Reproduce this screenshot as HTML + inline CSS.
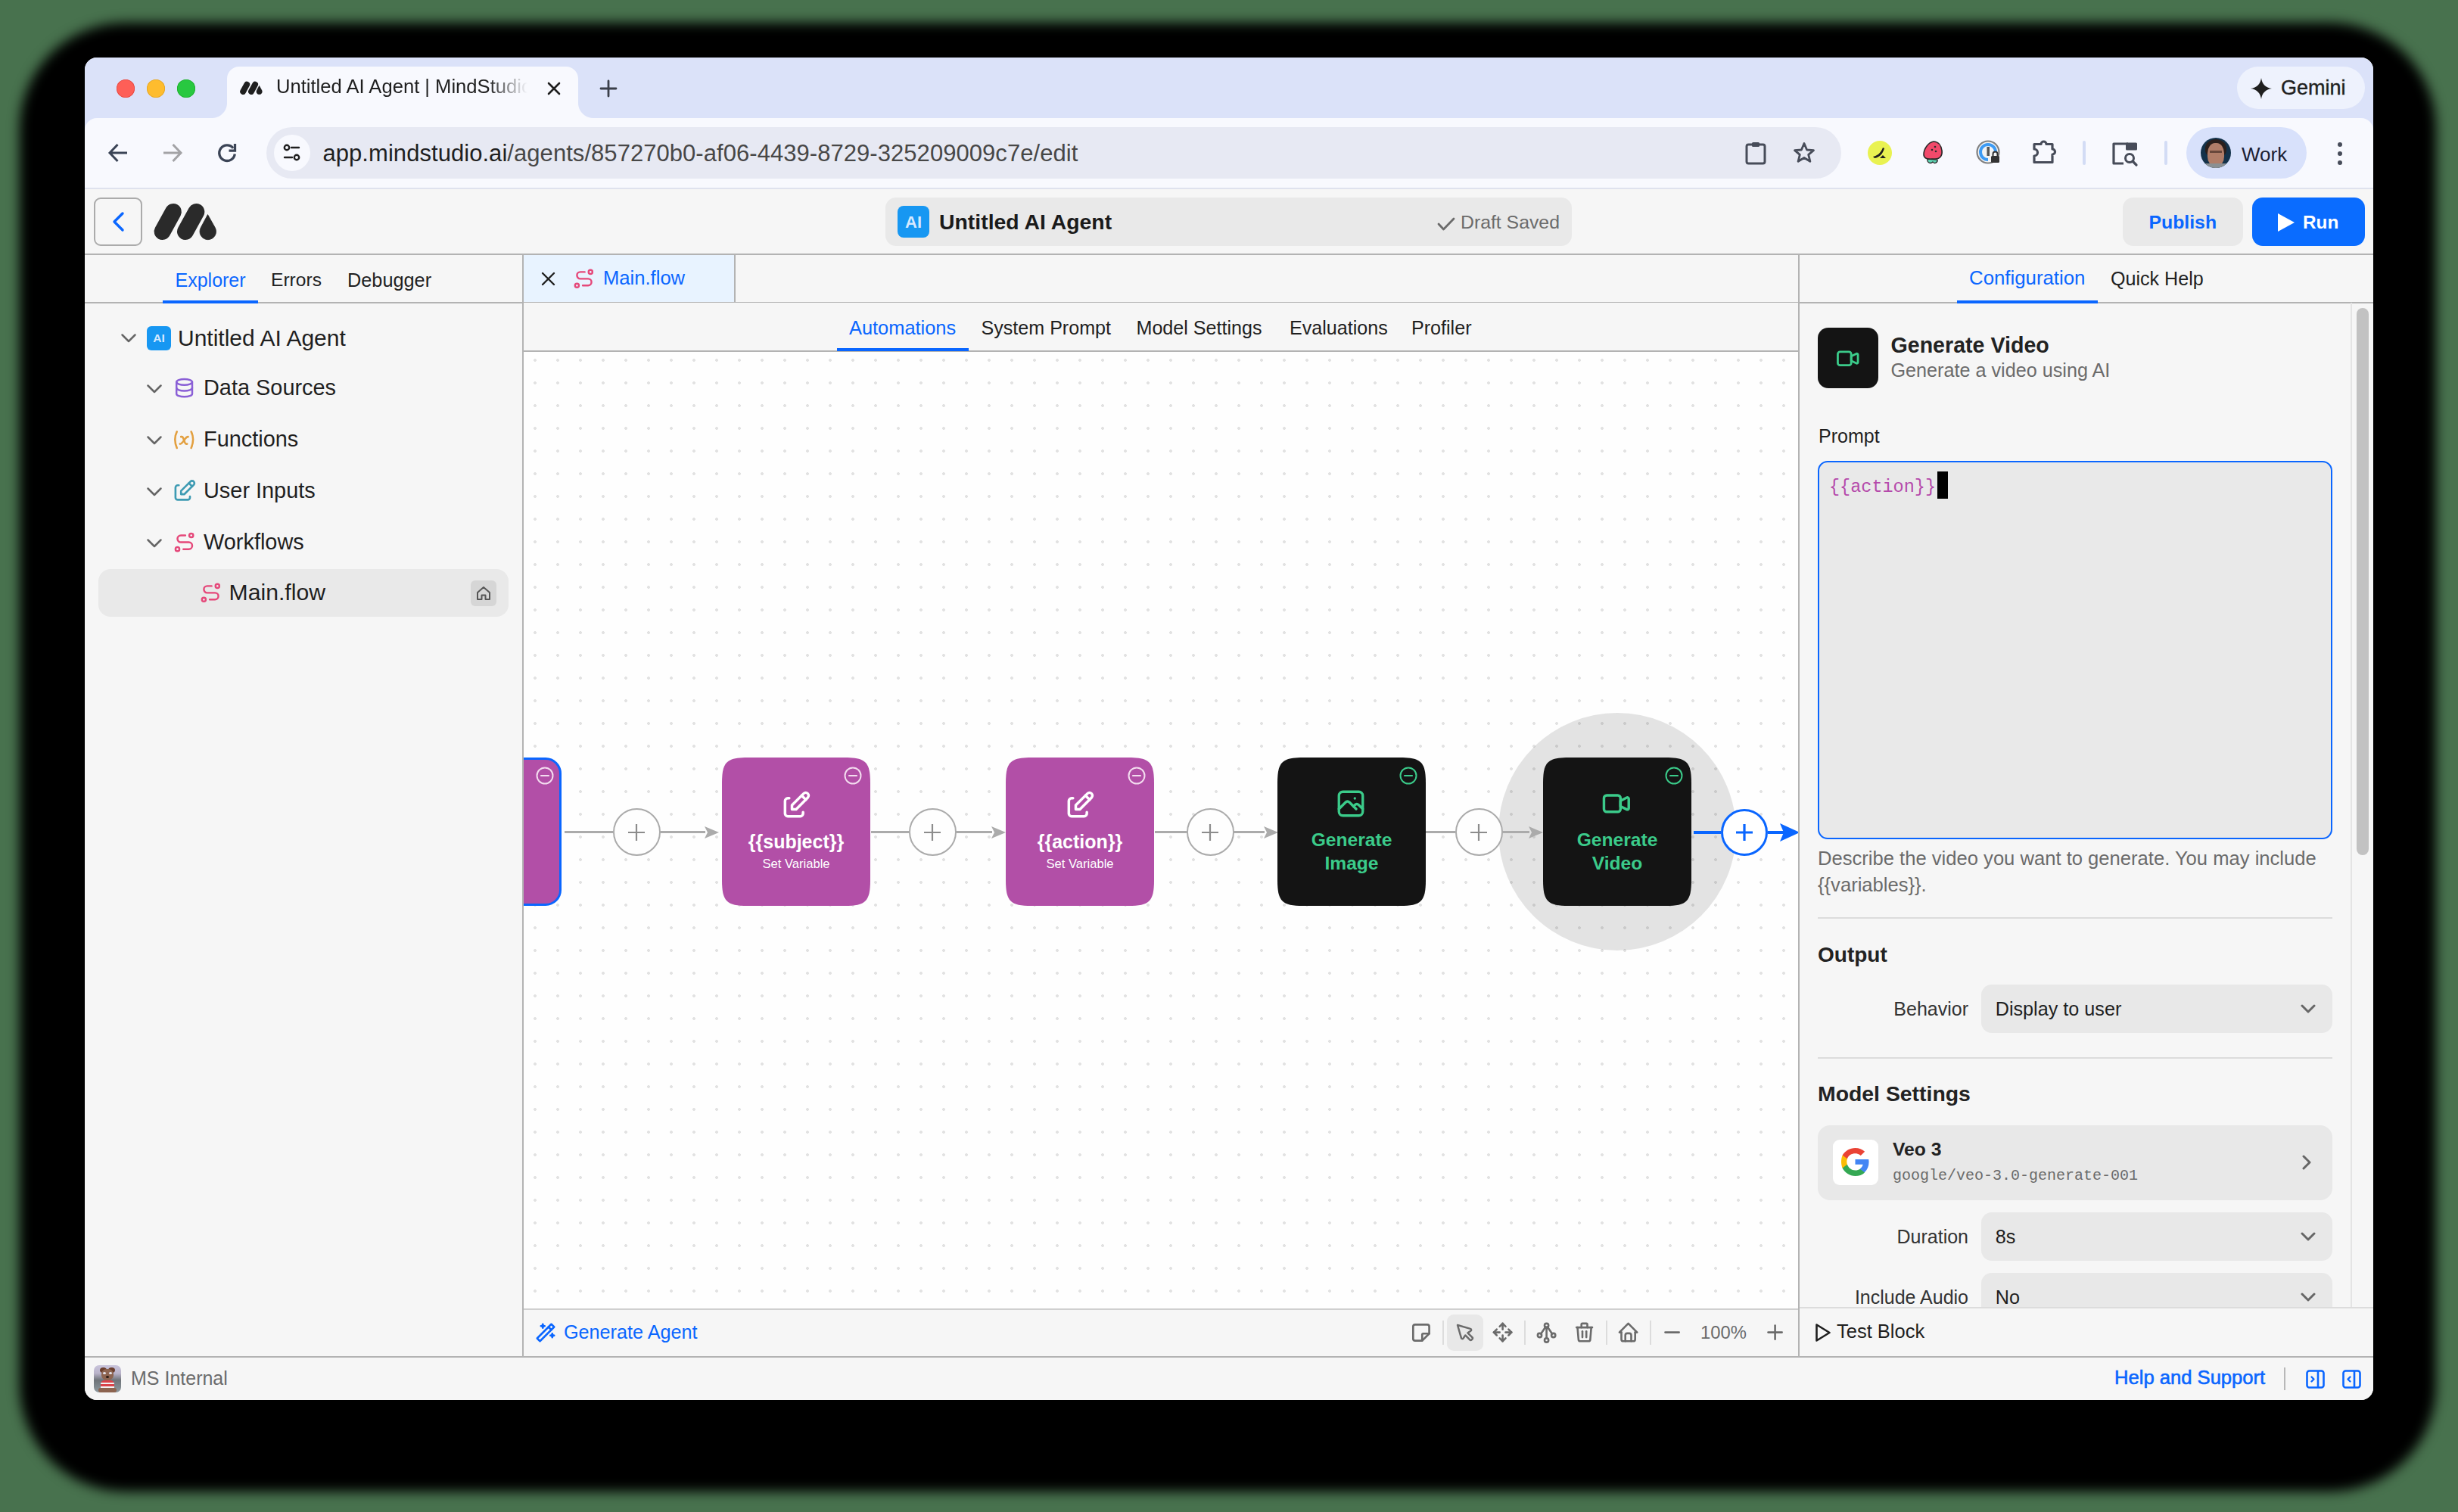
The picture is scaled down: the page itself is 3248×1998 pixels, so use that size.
<!DOCTYPE html>
<html><head><meta charset="utf-8">
<style>
*{box-sizing:border-box;margin:0;padding:0}
html,body{width:3248px;height:1998px;overflow:hidden;background:#48724e;font-family:"Liberation Sans",sans-serif}
.a{position:absolute}
.t{position:absolute;white-space:nowrap;line-height:1}
svg{position:absolute;overflow:visible}
#shadow{left:26px;top:30px;width:3193px;height:1941px;border-radius:140px;background:#000;filter:blur(8px)}
#win{position:absolute;left:0;top:0;width:3248px;height:1998px;clip-path:inset(76px 112px 148px 112px round 16px);background:#f6f6f6}
</style></head><body>
<div id="shadow" class="a"></div>
<div id="win">
<div class="a" style="left:112px;top:76px;width:3024px;height:100px;background:#dbe2f9;"></div>
<div class="a" style="left:154px;top:105px;width:24px;height:24px;border-radius:50%;background:#fe5f57;box-shadow:inset 0 0 0 0.8px #e2463f"></div>
<div class="a" style="left:194px;top:105px;width:24px;height:24px;border-radius:50%;background:#febc2e;box-shadow:inset 0 0 0 0.8px #e1a325"></div>
<div class="a" style="left:234px;top:105px;width:24px;height:24px;border-radius:50%;background:#28c840;box-shadow:inset 0 0 0 0.8px #1dad2b"></div>
<div class="a" style="left:300px;top:88px;width:464px;height:70px;background:#f8f9fe;border-radius:16px 16px 0 0"></div>
<div class="a" style="left:280px;top:136px;width:20px;height:20px;background:radial-gradient(circle at 0 0,#dbe2f9 19.5px,#f8f9fe 20.5px);"></div>
<div class="a" style="left:764px;top:136px;width:20px;height:20px;background:radial-gradient(circle at 100% 0,#dbe2f9 19.5px,#f8f9fe 20.5px);"></div>
<svg style="left:317px;top:107px;" width="30" height="18" viewBox="0 0 84 50"><line x1="11.6" y1="39" x2="25.9" y2="13" stroke="#1f1f1f" stroke-width="22" stroke-linecap="round"/><line x1="42" y1="39" x2="56.3" y2="13" stroke="#1f1f1f" stroke-width="22" stroke-linecap="round"/><path d="M71.5 16.6 L81.2 33.8 A10.75 10.75 0 1 1 62.3 33.8 Z" fill="#1f1f1f" stroke="#1f1f1f" stroke-width="0.8" stroke-linejoin="round"/></svg>
<div class="a" style="left:365px;top:96px;width:345px;height:40px;overflow:hidden;-webkit-mask-image:linear-gradient(90deg,#000 280px,transparent 332px)"><div class="t"  style="left:0px;top:6.3px;font-size:25.6px;color:#1f1f1f;font-weight:400;font-family:'Liberation Sans',sans-serif;">Untitled AI Agent | MindStudio</div>
</div>
<svg style="left:722px;top:107px;" width="20" height="20" viewBox="0 0 20 20"><path d="M3 3L17 17M17 3L3 17" stroke="#1f1f1f" stroke-width="2.6" stroke-linecap="round"/></svg>
<svg style="left:793px;top:106px;" width="22" height="22" viewBox="0 0 22 22"><path d="M11 1V21M1 11H21" stroke="#3b3f4a" stroke-width="2.8" stroke-linecap="round"/></svg>
<div class="a" style="left:2956px;top:88px;width:169px;height:56px;background:#eef2fd;border-radius:28px"></div>
<svg style="left:2974px;top:103px;" width="28" height="28" viewBox="0 0 28 28"><path d="M14 0 C15 8 20 13 28 14 C20 15 15 20 14 28 C13 20 8 15 0 14 C8 13 13 8 14 0Z" fill="#1f1f1f"/></svg>
<div class="t" style="left:3014.0px;top:103.1px;font-size:27px;color:#1f1f1f;font-weight:400;font-family:'Liberation Sans',sans-serif;-webkit-text-stroke:0.4px #1f1f1f">Gemini</div>
<div class="a" style="left:112px;top:156px;width:3024px;height:92px;background:#f8f9fe;border-radius:16px 16px 0 0"></div>
<div class="a" style="left:112px;top:248px;width:3024px;height:2px;background:#dfe2ee;"></div>
<svg style="left:143px;top:189px;" width="26" height="26" viewBox="0 0 26 26"><path d="M25 13H3M12.5 2L2 13L12.5 24" fill="none" stroke="#3b4456" stroke-width="3" stroke-linejoin="miter"/></svg>
<svg style="left:215px;top:189px;" width="26" height="26" viewBox="0 0 26 26"><path d="M1 13H23M13.5 2L24 13L13.5 24" fill="none" stroke="#a3a3a6" stroke-width="3" stroke-linejoin="miter"/></svg>
<svg style="left:288px;top:190px;" width="26" height="26" viewBox="0 0 26 26"><path d="M22.3 13.5A10.3 10.3 0 1 1 20.1 5.7" fill="none" stroke="#3b4456" stroke-width="3.3"/><path d="M14.5 9.2H22.5V0" fill="none" stroke="#3b4456" stroke-width="3.3"/></svg>
<div class="a" style="left:352px;top:168px;width:2081px;height:68px;background:#e7e9f3;border-radius:34px"></div>
<div class="a" style="left:362px;top:178px;width:48px;height:48px;background:#f8f9fe;border-radius:50%"></div>
<svg style="left:372px;top:188px;" width="28" height="28" viewBox="0 0 28 28"><circle cx="7" cy="7" r="3.2" fill="none" stroke="#1f1f1f" stroke-width="2.4"/><path d="M13 7H23" stroke="#1f1f1f" stroke-width="2.4" stroke-linecap="round"/><circle cx="20" cy="20" r="3.2" fill="none" stroke="#1f1f1f" stroke-width="2.4"/><path d="M4 20H14" stroke="#1f1f1f" stroke-width="2.4" stroke-linecap="round"/></svg>
<div class="t" style="left:426.5px;top:186.8px;font-size:31px;color:#474747;font-weight:400;font-family:'Liberation Sans',sans-serif;letter-spacing:0.05px"><span style="color:#1f1f1f">app.mindstudio.ai</span><span style="color:#474747">/agents/857270b0-af06-4439-8729-325209009c7e/edit</span></div>
<svg style="left:2305px;top:186px;" width="30" height="32" viewBox="0 0 30 32"><rect x="3" y="5" width="24" height="25" rx="2.5" fill="none" stroke="#474c59" stroke-width="3"/><rect x="10" y="2" width="10" height="6" rx="1.5" fill="#474c59"/></svg>
<svg style="left:2369px;top:187px;" width="30" height="30" viewBox="0 0 30 30"><path d="M15 2.5L18.6 11L27.5 11.6L20.7 17.4L22.9 26.3L15 21.5L7.1 26.3L9.3 17.4L2.5 11.6L11.4 11Z" fill="none" stroke="#474c59" stroke-width="2.8" stroke-linejoin="round"/></svg>
<div class="a" style="left:2468px;top:186px;width:32px;height:32px;background:#e9f252;border-radius:50%"></div>
<svg style="left:2468px;top:186px;" width="32" height="32" viewBox="0 0 32 32"><path d="M7 21 C12 20 17 17 20 9 L22 10 C20 17 16 22 9 23Z" fill="#1f1f1f"/><path d="M16 23 L20 19 L24 23Z" fill="#1f1f1f"/></svg>
<svg style="left:2540px;top:185px;" width="30" height="34" viewBox="0 0 30 34"><path d="M15 2 C8 3 2 12 2 19 C2 24 7 26 13 25 L17 25 C24 25 27 20 26 14 C25 7 21 2 15 2Z" fill="#f24a6b" stroke="#2b2b2b" stroke-width="1.6"/><path d="M7 25 C6 30 11 32 14 29 C16 32 21 30 20 26Z" fill="#5fd4b3" stroke="#2b2b2b" stroke-width="1.3"/><circle cx="17" cy="9" r="1.3" fill="#2b2b2b"/><circle cx="13" cy="13" r="1.3" fill="#2b2b2b"/><circle cx="18" cy="15" r="1.3" fill="#2b2b2b"/></svg>
<svg style="left:2611px;top:185px;" width="34" height="34" viewBox="0 0 34 34"><circle cx="16" cy="16" r="14.5" fill="#f3f3f3" stroke="#808080" stroke-width="2.2"/><path d="M16 26 A10 10 0 1 1 26 16" fill="none" stroke="#3d9bf5" stroke-width="4"/><rect x="14.5" y="9" width="3.5" height="12" fill="#555"/><rect x="20" y="21" width="11" height="9" rx="1.5" fill="#333"/><path d="M22.5 21V18.5A3 3 0 0 1 28.5 18.5V21" fill="none" stroke="#333" stroke-width="2"/></svg>
<svg style="left:2685px;top:183px;" width="34" height="34" viewBox="0 0 34 34"><path d="M3 7.5H12 A3.5 3.5 0 0 1 19 7.5H27V14 A3.5 3.5 0 0 1 27 21V31.5H3V23 A4.5 4.5 0 0 0 3 14Z" fill="none" stroke="#474c59" stroke-width="3.2" stroke-linejoin="round"/></svg>
<div class="a" style="left:2752px;top:186px;width:4px;height:32px;background:#d3dcf5;border-radius:2px"></div>
<svg style="left:2790px;top:187px;" width="38" height="34" viewBox="0 0 38 34"><path d="M22 3H3V29H16" fill="none" stroke="#474c59" stroke-width="3.2" stroke-linejoin="round"/><rect x="19" y="1.5" width="15" height="10" rx="1.5" fill="#474c59"/><circle cx="24" cy="22" r="5.5" fill="none" stroke="#474c59" stroke-width="3"/><path d="M28 26L33 31" stroke="#474c59" stroke-width="3.2" stroke-linecap="round"/></svg>
<div class="a" style="left:2860px;top:186px;width:4px;height:32px;background:#d3dcf5;border-radius:2px"></div>
<div class="a" style="left:2889px;top:168px;width:159px;height:68px;background:#d8e1fb;border-radius:34px"></div>
<div class="a" style="left:2908px;top:182px;width:40px;height:40px;border-radius:50%;overflow:hidden;background:#14324a"><div class="a" style="left:6px;top:2px;width:28px;height:24px;border-radius:50% 50% 40% 40%;background:#2a1f1c"></div><div class="a" style="left:9px;top:7px;width:22px;height:30px;border-radius:45% 45% 40% 40%;background:#b07d68"></div><div class="a" style="left:12px;top:17px;width:16px;height:3px;background:#4a3028;opacity:.7"></div><div class="a" style="left:5px;top:34px;width:30px;height:10px;background:#8a8f92"></div></div>
<div class="t" style="left:2962.0px;top:191.0px;font-size:26px;color:#1b2033;font-weight:400;font-family:'Liberation Sans',sans-serif;">Work</div>
<svg style="left:3086px;top:186px;" width="12" height="34" viewBox="0 0 12 34"><circle cx="6" cy="5" r="3" fill="#474c59"/><circle cx="6" cy="17" r="3" fill="#474c59"/><circle cx="6" cy="29" r="3" fill="#474c59"/></svg>
<div class="a" style="left:112px;top:250px;width:3024px;height:85px;background:#f6f6f6;"></div>
<div class="a" style="left:112px;top:335px;width:3024px;height:2px;background:#b3b3b3;"></div>
<div class="a" style="left:124px;top:261px;width:64px;height:64px;background:transparent;border:2px solid #ababab;border-radius:9px"></div>
<svg style="left:147px;top:279px;" width="18" height="28" viewBox="0 0 18 28"><path d="M15 3L4 14L15 25" fill="none" stroke="#0a66ff" stroke-width="3.4" stroke-linecap="round" stroke-linejoin="round"/></svg>
<svg style="left:203px;top:267px;" width="84" height="50" viewBox="0 0 84 50"><line x1="11.6" y1="39" x2="25.9" y2="13" stroke="#2a2a2a" stroke-width="22" stroke-linecap="round"/><line x1="42" y1="39" x2="56.3" y2="13" stroke="#2a2a2a" stroke-width="22" stroke-linecap="round"/><path d="M71.5 16.6 L81.2 33.8 A10.75 10.75 0 1 1 62.3 33.8 Z" fill="#2a2a2a" stroke="#2a2a2a" stroke-width="0.8" stroke-linejoin="round"/></svg>
<div class="a" style="left:1170px;top:261px;width:907px;height:64px;background:#e9e9e9;border-radius:14px"></div>
<div class="a" style="left:1186px;top:272px;width:42px;height:42px;background:#1797f2;border-radius:8px"></div>
<div class="t" style="left:807.0px;width:800px;text-align:center;top:282.9px;font-size:22px;color:#d6e9ff;font-weight:700;font-family:'Liberation Sans',sans-serif;">AI</div>
<div class="t" style="left:1241.0px;top:279.0px;font-size:28.4px;color:#1a1a1a;font-weight:700;font-family:'Liberation Sans',sans-serif;">Untitled AI Agent</div>
<svg style="left:1899px;top:286px;" width="24" height="20" viewBox="0 0 24 20"><path d="M2 10L8.5 17L22 3" fill="none" stroke="#6b6b6b" stroke-width="2.8" stroke-linecap="round" stroke-linejoin="round"/></svg>
<div class="t" style="left:1930.0px;top:282.0px;font-size:24.8px;color:#6b6b6b;font-weight:400;font-family:'Liberation Sans',sans-serif;">Draft Saved</div>
<div class="a" style="left:2805px;top:261px;width:159px;height:64px;background:#e9e9e9;border-radius:14px"></div>
<div class="t" style="left:2839.5px;top:282.0px;font-size:24.8px;color:#0a66ff;font-weight:700;font-family:'Liberation Sans',sans-serif;">Publish</div>
<div class="a" style="left:2976px;top:261px;width:149px;height:64px;background:#0a6cff;border-radius:14px"></div>
<svg style="left:3008px;top:281px;" width="26" height="26" viewBox="0 0 26 26"><path d="M2 1L24 13L2 25Z" fill="#fff"/></svg>
<div class="t" style="left:3043.0px;top:282.4px;font-size:24.3px;color:#ffffff;font-weight:700;font-family:'Liberation Sans',sans-serif;">Run</div>
<div class="a" style="left:112px;top:337px;width:578px;height:1455px;background:#f6f6f6;"></div>
<div class="a" style="left:690px;top:337px;width:2px;height:1455px;background:#b3b3b3;"></div>
<div class="t" style="left:231.5px;top:357.8px;font-size:25px;color:#0a66ff;font-weight:400;font-family:'Liberation Sans',sans-serif;">Explorer</div>
<div class="t" style="left:358.0px;top:358.2px;font-size:24.6px;color:#1f1f1f;font-weight:400;font-family:'Liberation Sans',sans-serif;">Errors</div>
<div class="t" style="left:459.0px;top:357.6px;font-size:25.3px;color:#1f1f1f;font-weight:400;font-family:'Liberation Sans',sans-serif;">Debugger</div>
<div class="a" style="left:112px;top:399px;width:578px;height:2px;background:#b3b3b3;"></div>
<div class="a" style="left:215px;top:397px;width:126px;height:4px;background:#0a66ff;"></div>
<svg style="left:160px;top:441px;" width="20" height="12" viewBox="0 0 20 12"><path d="M1.5 1.5L10 10L18.5 1.5" fill="none" stroke="#666666" stroke-width="2.5" stroke-linecap="round" stroke-linejoin="round"/></svg>
<div class="a" style="left:194px;top:431px;width:32px;height:32px;background:#1797f2;border-radius:6px"></div>
<div class="t" style="left:-190.0px;width:800px;text-align:center;top:439.4px;font-size:15.5px;color:#d6e9ff;font-weight:700;font-family:'Liberation Sans',sans-serif;">AI</div>
<div class="t" style="left:235.0px;top:431.6px;font-size:30px;color:#1f1f1f;font-weight:400;font-family:'Liberation Sans',sans-serif;">Untitled AI Agent</div>
<svg style="left:194px;top:508px;" width="20" height="12" viewBox="0 0 20 12"><path d="M1.5 1.5L10 10L18.5 1.5" fill="none" stroke="#666666" stroke-width="2.5" stroke-linecap="round" stroke-linejoin="round"/></svg>
<div class="t" style="left:269.0px;top:498.3px;font-size:28.9px;color:#1f1f1f;font-weight:400;font-family:'Liberation Sans',sans-serif;">Data Sources</div>
<svg style="left:194px;top:576px;" width="20" height="12" viewBox="0 0 20 12"><path d="M1.5 1.5L10 10L18.5 1.5" fill="none" stroke="#666666" stroke-width="2.5" stroke-linecap="round" stroke-linejoin="round"/></svg>
<div class="t" style="left:269.0px;top:566.3px;font-size:28.9px;color:#1f1f1f;font-weight:400;font-family:'Liberation Sans',sans-serif;">Functions</div>
<svg style="left:194px;top:644px;" width="20" height="12" viewBox="0 0 20 12"><path d="M1.5 1.5L10 10L18.5 1.5" fill="none" stroke="#666666" stroke-width="2.5" stroke-linecap="round" stroke-linejoin="round"/></svg>
<div class="t" style="left:269.0px;top:634.3px;font-size:28.9px;color:#1f1f1f;font-weight:400;font-family:'Liberation Sans',sans-serif;">User Inputs</div>
<svg style="left:194px;top:712px;" width="20" height="12" viewBox="0 0 20 12"><path d="M1.5 1.5L10 10L18.5 1.5" fill="none" stroke="#666666" stroke-width="2.5" stroke-linecap="round" stroke-linejoin="round"/></svg>
<div class="t" style="left:269.0px;top:702.3px;font-size:28.9px;color:#1f1f1f;font-weight:400;font-family:'Liberation Sans',sans-serif;">Workflows</div>
<svg style="left:228.1px;top:497.4px;" width="31.2" height="31.2" viewBox="0 0 24 24"><g fill="none" stroke="#8a5fd6" stroke-width="1.9" stroke-linecap="round" stroke-linejoin="round"><path d="M4 6a8 3 0 1 0 16 0a8 3 0 1 0 -16 0"/><path d="M4 6v6a8 3 0 0 0 16 0v-6"/><path d="M4 12v6a8 3 0 0 0 16 0v-6"/></g></svg>
<svg style="left:227.2px;top:565px;" width="32.4" height="32.4" viewBox="0 0 24 24"><g fill="none" stroke="#e3a040" stroke-width="1.9" stroke-linecap="round" stroke-linejoin="round"><path d="M5 4c-2.5 5 -2.5 10 0 16m14 -16c2.5 5 2.5 10 0 16m-10 -11h1c1 0 1 1 2.016 3.527c.984 2.473 .984 3.473 1.984 3.473h1"/><path d="M8 16c1.5 0 3 -2 4 -3.5s2.5 -3.5 4 -3.5"/></g></svg>
<svg style="left:226.1px;top:631.1px;" width="35.3" height="35.3" viewBox="0 0 24 24"><g fill="none" stroke="#3e9bb3" stroke-width="1.8" stroke-linecap="round" stroke-linejoin="round"><path d="M7 7h-1a2 2 0 0 0 -2 2v9a2 2 0 0 0 2 2h9a2 2 0 0 0 2 -2v-1"/><path d="M20.385 6.585a2.1 2.1 0 0 0 -2.97 -2.97l-8.415 8.385v3h3l8.415 -8.415z"/><path d="M16 5l3 3"/></g></svg>
<svg style="left:228.4px;top:701.4px;" width="31.2" height="31.2" viewBox="0 0 24 24"><g fill="none" stroke="#e5487a" stroke-width="1.9" stroke-linecap="round" stroke-linejoin="round"><path d="M3 19a2 2 0 1 0 4 0a2 2 0 0 0 -4 0"/><path d="M19 7a2 2 0 1 0 0 -4a2 2 0 0 0 0 4z"/><path d="M11 19h5.5a3.5 3.5 0 0 0 0 -7h-8a3.5 3.5 0 0 1 0 -7h4.5"/></g></svg>
<div class="a" style="left:130px;top:752px;width:542px;height:63px;background:#e9e9e9;border-radius:16px"></div>
<svg style="left:263px;top:767.8px;" width="30.7" height="30.7" viewBox="0 0 24 24"><g fill="none" stroke="#e5487a" stroke-width="1.9" stroke-linecap="round" stroke-linejoin="round"><path d="M3 19a2 2 0 1 0 4 0a2 2 0 0 0 -4 0"/><path d="M19 7a2 2 0 1 0 0 -4a2 2 0 0 0 0 4z"/><path d="M11 19h5.5a3.5 3.5 0 0 0 0 -7h-8a3.5 3.5 0 0 1 0 -7h4.5"/></g></svg>
<div class="t" style="left:302.5px;top:768.0px;font-size:30.2px;color:#1f1f1f;font-weight:400;font-family:'Liberation Sans',sans-serif;">Main.flow</div>
<div class="a" style="left:622px;top:767px;width:34px;height:34px;background:#d6d6d6;border-radius:6px"></div>
<svg style="left:629px;top:774px;" width="20" height="20" viewBox="0 0 20 20"><path d="M2 9L10 2L18 9V18H12.5V12.5H7.5V18H2Z" fill="none" stroke="#555" stroke-width="2" stroke-linejoin="round"/></svg>
<div class="a" style="left:692px;top:337px;width:1684px;height:61px;background:#f6f6f6;"></div>
<div class="a" style="left:692px;top:337px;width:278px;height:62px;background:#e8f3ff;"></div>
<div class="a" style="left:970px;top:337px;width:2px;height:62px;background:#b3b3b3;"></div>
<div class="a" style="left:692px;top:399px;width:1684px;height:2px;background:#b3b3b3;"></div>
<svg style="left:715px;top:359px;" width="19" height="19" viewBox="0 0 19 19"><path d="M2 2L17 17M17 2L2 17" stroke="#1f1f1f" stroke-width="2.4" stroke-linecap="round"/></svg>
<svg style="left:756.4px;top:353px;" width="30.7" height="30.7" viewBox="0 0 24 24"><g fill="none" stroke="#e5487a" stroke-width="1.9" stroke-linecap="round" stroke-linejoin="round"><path d="M3 19a2 2 0 1 0 4 0a2 2 0 0 0 -4 0"/><path d="M19 7a2 2 0 1 0 0 -4a2 2 0 0 0 0 4z"/><path d="M11 19h5.5a3.5 3.5 0 0 0 0 -7h-8a3.5 3.5 0 0 1 0 -7h4.5"/></g></svg>
<div class="t" style="left:797.0px;top:355.3px;font-size:25.6px;color:#0a66ff;font-weight:400;font-family:'Liberation Sans',sans-serif;">Main.flow</div>
<div class="a" style="left:692px;top:400px;width:1684px;height:63px;background:#f6f6f6;"></div>
<div class="a" style="left:692px;top:463px;width:1684px;height:2px;background:#b3b3b3;"></div>
<div class="t" style="left:1122.0px;top:420.5px;font-size:25.4px;color:#0a66ff;font-weight:400;font-family:'Liberation Sans',sans-serif;">Automations</div>
<div class="a" style="left:1106px;top:460px;width:174px;height:4px;background:#0a66ff;"></div>
<div class="t" style="left:1296.5px;top:420.8px;font-size:25.1px;color:#1f1f1f;font-weight:400;font-family:'Liberation Sans',sans-serif;">System Prompt</div>
<div class="t" style="left:1501.5px;top:420.8px;font-size:25.1px;color:#1f1f1f;font-weight:400;font-family:'Liberation Sans',sans-serif;">Model Settings</div>
<div class="t" style="left:1704.0px;top:420.8px;font-size:25.1px;color:#1f1f1f;font-weight:400;font-family:'Liberation Sans',sans-serif;">Evaluations</div>
<div class="t" style="left:1865.0px;top:420.8px;font-size:25.1px;color:#1f1f1f;font-weight:400;font-family:'Liberation Sans',sans-serif;">Profiler</div>
<div class="a" style="left:692px;top:465px;width:1684px;height:1264px;background-color:#fefefe;background-image:radial-gradient(circle,#e2e2e2 1.7px,transparent 2.2px);background-size:30px 30px;background-position:0px -4px"></div>
<div class="a" style="left:692px;top:1729px;width:1684px;height:2px;background:#cfcfcf;"></div>
<div class="a" style="left:692px;top:1731px;width:1684px;height:61px;background:#f6f6f6;"></div>
<svg style="left:706px;top:1745.5px;" width="30" height="30" viewBox="0 0 24 24"><g fill="none" stroke="#0a66ff" stroke-width="2" stroke-linecap="round" stroke-linejoin="round"><path d="M6 21l15 -15l-3 -3l-15 15l3 3"/><path d="M15 6l3 3"/><path d="M9 3a2 2 0 0 0 2 2a2 2 0 0 0 -2 2a2 2 0 0 0 -2 -2a2 2 0 0 0 2 -2"/><path d="M19 13a2 2 0 0 0 2 2a2 2 0 0 0 -2 2a2 2 0 0 0 -2 -2a2 2 0 0 0 2 -2"/></g></svg>
<div class="t" style="left:745.0px;top:1747.7px;font-size:25.2px;color:#0a66ff;font-weight:400;font-family:'Liberation Sans',sans-serif;">Generate Agent</div>
<svg style="left:1862.0px;top:1745.0px;" width="31.9" height="31.9" viewBox="0 0 24 24"><g fill="none" stroke="#6b6b6b" stroke-width="2" stroke-linecap="round" stroke-linejoin="round"><path d="M13 20l7 -7"/><path d="M13 20v-6a1 1 0 0 1 1 -1h6v-7a2 2 0 0 0 -2 -2h-12a2 2 0 0 0 -2 2v12a2 2 0 0 0 2 2h7"/></g></svg>
<div class="a" style="left:1906px;top:1745px;width:2px;height:32px;background:#dcdcdc;"></div>
<div class="a" style="left:2014px;top:1745px;width:2px;height:32px;background:#dcdcdc;"></div>
<div class="a" style="left:2122px;top:1745px;width:2px;height:32px;background:#dcdcdc;"></div>
<div class="a" style="left:2180px;top:1745px;width:2px;height:32px;background:#dcdcdc;"></div>
<div class="a" style="left:1912px;top:1737px;width:48px;height:48px;background:#e8e8e8;border-radius:9px"></div>
<svg style="left:1921.0px;top:1746.0px;" width="30.0" height="30.0" viewBox="0 0 24 24"><g fill="none" stroke="#6b6b6b" stroke-width="2" stroke-linecap="round" stroke-linejoin="round"><path d="M7.904 17.563a1.2 1.2 0 0 0 2.228 .308l2.09 -3.093l4.907 4.907a1.067 1.067 0 0 0 1.509 0l1.047 -1.047a1.067 1.067 0 0 0 0 -1.509l-4.907 -4.907l3.113 -2.09a1.2 1.2 0 0 0 -.309 -2.228l-13.582 -3.904l3.904 13.563z"/></g></svg>
<svg style="left:1970.4px;top:1745.4px;" width="31.2" height="31.2" viewBox="0 0 24 24"><g fill="none" stroke="#6b6b6b" stroke-width="2" stroke-linecap="round" stroke-linejoin="round"><path d="M18 9l3 3l-3 3"/><path d="M15 12h6"/><path d="M6 9l-3 3l3 3"/><path d="M3 12h6"/><path d="M9 18l3 3l3 -3"/><path d="M12 15v6"/><path d="M15 6l-3 -3l-3 3"/><path d="M12 3v6"/></g></svg>
<svg style="left:2028.4px;top:1745.4px;" width="31.2" height="31.2" viewBox="0 0 24 24"><g fill="none" stroke="#6b6b6b" stroke-width="2" stroke-linecap="round" stroke-linejoin="round"><circle cx="12" cy="5" r="2"/><circle cx="5" cy="15" r="2"/><circle cx="19" cy="15" r="2"/><circle cx="12" cy="20" r="2"/><path d="M12 7v11M11 6.5L6.3 13.4M13 6.5L17.7 13.4"/></g></svg>
<svg style="left:2078.4px;top:1745.4px;" width="31.2" height="31.2" viewBox="0 0 24 24"><g fill="none" stroke="#6b6b6b" stroke-width="2" stroke-linecap="round" stroke-linejoin="round"><path d="M4 7l16 0"/><path d="M10 11l0 6"/><path d="M14 11l0 6"/><path d="M5 7l1 12a2 2 0 0 0 2 2h8a2 2 0 0 0 2 -2l1 -12"/><path d="M9 7v-3a1 1 0 0 1 1 -1h4a1 1 0 0 1 1 1v3"/></g></svg>
<svg style="left:2136.4px;top:1745.4px;" width="31.2" height="31.2" viewBox="0 0 24 24"><g fill="none" stroke="#6b6b6b" stroke-width="2" stroke-linecap="round" stroke-linejoin="round"><path d="M5 12l-2 0l9 -9l9 9l-2 0"/><path d="M5 12v7a2 2 0 0 0 2 2h10a2 2 0 0 0 2 -2v-7"/><path d="M9 21v-6a2 2 0 0 1 2 -2h2a2 2 0 0 1 2 2v6"/></g></svg>
<svg style="left:2194.4px;top:1745.4px;" width="31.2" height="31.2" viewBox="0 0 24 24"><g fill="none" stroke="#6b6b6b" stroke-width="2" stroke-linecap="round" stroke-linejoin="round"><path d="M5 12l14 0"/></g></svg>
<div class="t" style="left:2247.0px;top:1748.9px;font-size:23.8px;color:#6b6b6b;font-weight:400;font-family:'Liberation Sans',sans-serif;">100%</div>
<svg style="left:2330.4px;top:1745.4px;" width="31.2" height="31.2" viewBox="0 0 24 24"><g fill="none" stroke="#6b6b6b" stroke-width="2" stroke-linecap="round" stroke-linejoin="round"><path d="M12 5l0 14"/><path d="M5 12l14 0"/></g></svg>
<div class="a" style="left:0;top:0;width:3248px;height:1998px;clip-path:inset(465px 872px 269px 692px)">
<div class="a" style="left:1980px;top:942px;width:314px;height:314px;border-radius:50%;background:rgba(0,0,0,0.105)"></div>
<div class="a" style="left:746px;top:1098.0px;width:64px;height:3px;background:#ababab;"></div>
<div class="a" style="left:809.5px;top:1068.0px;width:63px;height:63px;border-radius:50%;border:2.2px solid #ababab;background:#fefefe"></div>
<svg style="left:829px;top:1087.5px;" width="24" height="24" viewBox="0 0 24 24"><path d="M12 1V23M1 12H23" stroke="#8c8c8c" stroke-width="2.2"/></svg>
<div class="a" style="left:872px;top:1098.0px;width:60px;height:3px;background:#ababab;"></div>
<svg style="left:931px;top:1091.5px;" width="19" height="16" viewBox="0 0 19 16"><path d="M0 0L19 8L0 16L4 8Z" fill="#ababab"/></svg>
<div class="a" style="left:1151px;top:1098.0px;width:50px;height:3px;background:#ababab;"></div>
<div class="a" style="left:1200.5px;top:1068.0px;width:63px;height:63px;border-radius:50%;border:2.2px solid #ababab;background:#fefefe"></div>
<svg style="left:1220px;top:1087.5px;" width="24" height="24" viewBox="0 0 24 24"><path d="M12 1V23M1 12H23" stroke="#8c8c8c" stroke-width="2.2"/></svg>
<div class="a" style="left:1263px;top:1098.0px;width:48px;height:3px;background:#ababab;"></div>
<svg style="left:1310px;top:1091.5px;" width="19" height="16" viewBox="0 0 19 16"><path d="M0 0L19 8L0 16L4 8Z" fill="#ababab"/></svg>
<div class="a" style="left:1526px;top:1098.0px;width:42px;height:3px;background:#ababab;"></div>
<div class="a" style="left:1567.5px;top:1068.0px;width:63px;height:63px;border-radius:50%;border:2.2px solid #ababab;background:#fefefe"></div>
<svg style="left:1587px;top:1087.5px;" width="24" height="24" viewBox="0 0 24 24"><path d="M12 1V23M1 12H23" stroke="#8c8c8c" stroke-width="2.2"/></svg>
<div class="a" style="left:1630px;top:1098.0px;width:41px;height:3px;background:#ababab;"></div>
<svg style="left:1670px;top:1091.5px;" width="19" height="16" viewBox="0 0 19 16"><path d="M0 0L19 8L0 16L4 8Z" fill="#ababab"/></svg>
<div class="a" style="left:1884px;top:1098.0px;width:39px;height:3px;background:#ababab;"></div>
<div class="a" style="left:1922.5px;top:1068.0px;width:63px;height:63px;border-radius:50%;border:2.2px solid #ababab;background:#fefefe"></div>
<svg style="left:1942px;top:1087.5px;" width="24" height="24" viewBox="0 0 24 24"><path d="M12 1V23M1 12H23" stroke="#8c8c8c" stroke-width="2.2"/></svg>
<div class="a" style="left:1985px;top:1098.0px;width:36px;height:3px;background:#ababab;"></div>
<svg style="left:2020px;top:1091.5px;" width="19" height="16" viewBox="0 0 19 16"><path d="M0 0L19 8L0 16L4 8Z" fill="#ababab"/></svg>
<div class="a" style="left:546px;top:1001px;width:196px;height:196px;border-radius:21px;background:#b24fa7;border:3.8px solid #0a66ff"></div>
<svg style="left:708px;top:1013px;" width="24" height="24" viewBox="0 0 24 24"><circle cx="12" cy="12" r="10.5" fill="none" stroke="#f3dcef" stroke-width="2"/><path d="M7 12H17" stroke="#f3dcef" stroke-width="2.2" stroke-linecap="round"/></svg>
<svg style="left:954px;top:1001px;" width="196" height="196" viewBox="0 0 196 196"><path d="M34 0H162C190 0 196 6 196 34V162C196 190 190 196 162 196H34C6 196 0 190 0 162V34C0 6 6 0 34 0Z" fill="#b24fa7"/></svg>
<svg style="left:1115px;top:1013px;" width="24" height="24" viewBox="0 0 24 24"><circle cx="12" cy="12" r="10.5" fill="none" stroke="#f3dcef" stroke-width="2"/><path d="M7 12H17" stroke="#f3dcef" stroke-width="2.2" stroke-linecap="round"/></svg>
<svg style="left:1029.5px;top:1041.7px;" width="44" height="44" viewBox="0 0 24 24"><g fill="none" stroke="#fff" stroke-width="1.9" stroke-linecap="round" stroke-linejoin="round"><path d="M7 7h-1a2 2 0 0 0 -2 2v9a2 2 0 0 0 2 2h9a2 2 0 0 0 2 -2v-1"/><path d="M20.385 6.585a2.1 2.1 0 0 0 -2.97 -2.97l-8.415 8.385v3h3l8.415 -8.415z"/><path d="M16 5l3 3"/></g></svg>
<div class="t" style="left:652.0px;width:800px;text-align:center;top:1099.8px;font-size:25px;color:#ffffff;font-weight:700;font-family:'Liberation Sans',sans-serif;">{{subject}}</div>
<div class="t" style="left:652.0px;width:800px;text-align:center;top:1133.9px;font-size:16.6px;color:#ffffff;font-weight:400;font-family:'Liberation Sans',sans-serif;">Set Variable</div>
<svg style="left:1329px;top:1001px;" width="196" height="196" viewBox="0 0 196 196"><path d="M34 0H162C190 0 196 6 196 34V162C196 190 190 196 162 196H34C6 196 0 190 0 162V34C0 6 6 0 34 0Z" fill="#b24fa7"/></svg>
<svg style="left:1490px;top:1013px;" width="24" height="24" viewBox="0 0 24 24"><circle cx="12" cy="12" r="10.5" fill="none" stroke="#f3dcef" stroke-width="2"/><path d="M7 12H17" stroke="#f3dcef" stroke-width="2.2" stroke-linecap="round"/></svg>
<svg style="left:1404.5px;top:1041.7px;" width="44" height="44" viewBox="0 0 24 24"><g fill="none" stroke="#fff" stroke-width="1.9" stroke-linecap="round" stroke-linejoin="round"><path d="M7 7h-1a2 2 0 0 0 -2 2v9a2 2 0 0 0 2 2h9a2 2 0 0 0 2 -2v-1"/><path d="M20.385 6.585a2.1 2.1 0 0 0 -2.97 -2.97l-8.415 8.385v3h3l8.415 -8.415z"/><path d="M16 5l3 3"/></g></svg>
<div class="t" style="left:1027.0px;width:800px;text-align:center;top:1099.8px;font-size:25px;color:#ffffff;font-weight:700;font-family:'Liberation Sans',sans-serif;">{{action}}</div>
<div class="t" style="left:1027.0px;width:800px;text-align:center;top:1133.9px;font-size:16.6px;color:#ffffff;font-weight:400;font-family:'Liberation Sans',sans-serif;">Set Variable</div>
<svg style="left:1688px;top:1001px;" width="196" height="196" viewBox="0 0 196 196"><path d="M34 0H162C190 0 196 6 196 34V162C196 190 190 196 162 196H34C6 196 0 190 0 162V34C0 6 6 0 34 0Z" fill="#141414"/></svg>
<svg style="left:1849px;top:1013px;" width="24" height="24" viewBox="0 0 24 24"><circle cx="12" cy="12" r="10.5" fill="none" stroke="#3bcb8a" stroke-width="2"/><path d="M7 12H17" stroke="#3bcb8a" stroke-width="2.2" stroke-linecap="round"/></svg>
<svg style="left:1764.3px;top:1040.5px;" width="42" height="42" viewBox="0 0 24 24"><g fill="none" stroke="#3bcb8a" stroke-width="1.9" stroke-linecap="round" stroke-linejoin="round"><path d="M15 8h.01"/><path d="M3 6a3 3 0 0 1 3 -3h12a3 3 0 0 1 3 3v12a3 3 0 0 1 -3 3h-12a3 3 0 0 1 -3 -3v-12z"/><path d="M3 16l5 -5c.928 -.893 2.072 -.893 3 0l5 5"/><path d="M14 14l1 -1c.928 -.893 2.072 -.893 3 0l3 3"/></g></svg>
<div class="t" style="left:1386.0px;width:800px;text-align:center;top:1098.2px;font-size:24.6px;color:#3bcb8a;font-weight:700;font-family:'Liberation Sans',sans-serif;">Generate</div>
<div class="t" style="left:1386.0px;width:800px;text-align:center;top:1129.2px;font-size:24.6px;color:#3bcb8a;font-weight:700;font-family:'Liberation Sans',sans-serif;">Image</div>
<svg style="left:2039px;top:1001px;" width="196" height="196" viewBox="0 0 196 196"><path d="M34 0H162C190 0 196 6 196 34V162C196 190 190 196 162 196H34C6 196 0 190 0 162V34C0 6 6 0 34 0Z" fill="#141414"/></svg>
<svg style="left:2200px;top:1013px;" width="24" height="24" viewBox="0 0 24 24"><circle cx="12" cy="12" r="10.5" fill="none" stroke="#3bcb8a" stroke-width="2"/><path d="M7 12H17" stroke="#3bcb8a" stroke-width="2.2" stroke-linecap="round"/></svg>
<svg style="left:2114.4px;top:1039.9px;" width="43.7" height="43.7" viewBox="0 0 24 24"><g fill="none" stroke="#3bcb8a" stroke-width="1.9" stroke-linecap="round" stroke-linejoin="round"><path d="M15 10l4.553 -2.276a1 1 0 0 1 1.447 .894v6.764a1 1 0 0 1 -1.447 .894l-4.553 -2.276v-4z"/><path d="M3 8a2 2 0 0 1 2 -2h8a2 2 0 0 1 2 2v8a2 2 0 0 1 -2 2h-8a2 2 0 0 1 -2 -2z"/></g></svg>
<div class="t" style="left:1737.0px;width:800px;text-align:center;top:1098.2px;font-size:24.6px;color:#3bcb8a;font-weight:700;font-family:'Liberation Sans',sans-serif;">Generate</div>
<div class="t" style="left:1737.0px;width:800px;text-align:center;top:1129.2px;font-size:24.6px;color:#3bcb8a;font-weight:700;font-family:'Liberation Sans',sans-serif;">Video</div>
<div class="a" style="left:2238px;top:1097.5px;width:36px;height:4px;background:#0a66ff;"></div>
<div class="a" style="left:2274px;top:1068.5px;width:62px;height:62px;border-radius:50%;border:3px solid #0a66ff;background:#fff"></div>
<svg style="left:2293px;top:1087.5px;" width="24" height="24" viewBox="0 0 24 24"><path d="M12 1V23M1 12H23" stroke="#0a66ff" stroke-width="3.2"/></svg>
<div class="a" style="left:2336px;top:1097.5px;width:30px;height:4px;background:#0a66ff;"></div>
<svg style="left:2352px;top:1087.5px;" width="26" height="24" viewBox="0 0 26 24"><path d="M0 0L26 12L0 24L5 12Z" fill="#0a66ff"/></svg>
</div>
<div class="a" style="left:2378px;top:337px;width:758px;height:1455px;background:#f6f6f6;"></div>
<div class="a" style="left:2376px;top:337px;width:2px;height:1455px;background:#b3b3b3;"></div>
<div class="t" style="left:2602.0px;top:355.2px;font-size:25.8px;color:#0a66ff;font-weight:400;font-family:'Liberation Sans',sans-serif;">Configuration</div>
<div class="t" style="left:2789.0px;top:355.8px;font-size:25.1px;color:#1f1f1f;font-weight:400;font-family:'Liberation Sans',sans-serif;">Quick Help</div>
<div class="a" style="left:2378px;top:399px;width:758px;height:2px;background:#b3b3b3;"></div>
<div class="a" style="left:2586px;top:397px;width:186px;height:4px;background:#0a66ff;"></div>
<div class="a" style="left:3106px;top:400px;width:2px;height:1328px;background:#e4e4e4;"></div>
<div class="a" style="left:3114px;top:407px;width:16px;height:723px;background:#c2c2c2;border-radius:8px"></div>
<div class="a" style="left:2402px;top:433px;width:80px;height:80px;background:#141414;border-radius:14px"></div>
<svg style="left:2424px;top:455.8px;" width="35.5" height="35.5" viewBox="0 0 24 24"><g fill="none" stroke="#3bcb8a" stroke-width="1.9" stroke-linecap="round" stroke-linejoin="round"><path d="M15 10l4.553 -2.276a1 1 0 0 1 1.447 .894v6.764a1 1 0 0 1 -1.447 .894l-4.553 -2.276v-4z"/><path d="M3 8a2 2 0 0 1 2 -2h8a2 2 0 0 1 2 2v8a2 2 0 0 1 -2 2h-8a2 2 0 0 1 -2 -2z"/></g></svg>
<div class="t" style="left:2498.5px;top:441.8px;font-size:28.6px;color:#222222;font-weight:700;font-family:'Liberation Sans',sans-serif;">Generate Video</div>
<div class="t" style="left:2498.5px;top:476.7px;font-size:25.2px;color:#6b6b6b;font-weight:400;font-family:'Liberation Sans',sans-serif;">Generate a video using AI</div>
<div class="t" style="left:2403.0px;top:564.3px;font-size:25px;color:#1f1f1f;font-weight:400;font-family:'Liberation Sans',sans-serif;">Prompt</div>
<div class="a" style="left:2402px;top:609px;width:680px;height:500px;background:#e9e9e9;border:2.2px solid #0a66ff;border-radius:13px"></div>
<div class="t" style="left:2417.0px;top:632.0px;font-size:23.5px;color:#b54aab;font-weight:400;font-family:'Liberation Mono',monospace;">{{action}}</div>
<div class="a" style="left:2560px;top:623px;width:14px;height:36px;background:#000;"></div>
<div class="t" style="left:2402.0px;top:1121.8px;font-size:25.6px;color:#6b6b6b;font-weight:400;font-family:'Liberation Sans',sans-serif;">Describe the video you want to generate. You may include</div>
<div class="t" style="left:2402.0px;top:1157.3px;font-size:25.6px;color:#6b6b6b;font-weight:400;font-family:'Liberation Sans',sans-serif;">{{variables}}.</div>
<div class="a" style="left:2402px;top:1212px;width:680px;height:2px;background:#dcdcdc;"></div>
<div class="t" style="left:2402.0px;top:1248.3px;font-size:28px;color:#222222;font-weight:700;font-family:'Liberation Sans',sans-serif;">Output</div>
<div class="t" style="right:647.0px;top:1320.8px;font-size:25px;color:#333333;font-weight:400;font-family:'Liberation Sans',sans-serif;">Behavior</div>
<div class="a" style="left:2618px;top:1301px;width:464px;height:64px;background:#e8e8e8;border-radius:14px"></div>
<div class="t" style="left:2636.7px;top:1320.7px;font-size:25.2px;color:#1f1f1f;font-weight:400;font-family:'Liberation Sans',sans-serif;">Display to user</div>
<svg style="left:3040px;top:1327px;" width="20" height="12" viewBox="0 0 20 12"><path d="M2 2L10 10L18 2" fill="none" stroke="#666666" stroke-width="3" stroke-linecap="round" stroke-linejoin="round"/></svg>
<div class="a" style="left:2402px;top:1397px;width:680px;height:2px;background:#dcdcdc;"></div>
<div class="t" style="left:2402.0px;top:1431.0px;font-size:28.4px;color:#222222;font-weight:700;font-family:'Liberation Sans',sans-serif;">Model Settings</div>
<div class="a" style="left:2402px;top:1487px;width:680px;height:99px;background:#e8e8e8;border-radius:16px"></div>
<div class="a" style="left:2422px;top:1506px;width:60px;height:60px;background:#ffffff;border-radius:9px"></div>
<svg style="left:2433px;top:1517px;" width="37" height="37" viewBox="0 0 41 41"><path d="M40.5 20.5c0-1.4-.1-2.7-.4-4H20.5v7.6h11.2c-.5 2.6-2 4.8-4.2 6.3v5.1h6.8c4-3.7 6.2-9.1 6.2-15z" fill="#4285F4"/>
<path d="M20.5 41c5.6 0 10.4-1.9 13.9-5.1l-6.8-5.1c-1.9 1.3-4.3 2-7.1 2-5.4 0-10-3.7-11.7-8.6H1.8v5.3C5.3 36.4 12.4 41 20.5 41z" fill="#34A853"/>
<path d="M8.8 24.2c-.4-1.3-.7-2.7-.7-4.2s.3-2.9.7-4.2v-5.3H1.8C.7 13.1 0 16.5 0 20s.7 6.9 1.8 9.5l7-5.3z" fill="#FBBC05"/>
<path d="M20.5 8.1c3.1 0 5.8 1.1 8 3.1l6-6C30.9 1.9 26.1 0 20.5 0 12.4 0 5.3 4.6 1.8 10.5l7 5.3c1.7-4.9 6.3-7.7 11.7-7.7z" fill="#EA4335"/></svg>
<div class="t" style="left:2501.0px;top:1507.1px;font-size:24.7px;color:#222222;font-weight:700;font-family:'Liberation Sans',sans-serif;">Veo 3</div>
<div class="t" style="left:2501.0px;top:1543.7px;font-size:20px;color:#6b6b6b;font-weight:400;font-family:'Liberation Mono',monospace;">google/veo-3.0-generate-001</div>
<svg style="left:3042px;top:1526px;" width="12" height="20" viewBox="0 0 12 20"><path d="M2 2L10 10L2 18" fill="none" stroke="#666666" stroke-width="3" stroke-linecap="round" stroke-linejoin="round"/></svg>
<div class="t" style="right:647.0px;top:1621.8px;font-size:25px;color:#333333;font-weight:400;font-family:'Liberation Sans',sans-serif;">Duration</div>
<div class="a" style="left:2618px;top:1602px;width:464px;height:64px;background:#e8e8e8;border-radius:14px"></div>
<div class="t" style="left:2636.7px;top:1621.7px;font-size:25.2px;color:#1f1f1f;font-weight:400;font-family:'Liberation Sans',sans-serif;">8s</div>
<svg style="left:3040px;top:1628px;" width="20" height="12" viewBox="0 0 20 12"><path d="M2 2L10 10L18 2" fill="none" stroke="#666666" stroke-width="3" stroke-linecap="round" stroke-linejoin="round"/></svg>
<div class="a" style="left:0;top:0;width:3248px;height:1998px;clip-path:inset(400px 140px 270px 2378px)">
<div class="t" style="right:647.0px;top:1701.8px;font-size:25px;color:#333333;font-weight:400;font-family:'Liberation Sans',sans-serif;">Include Audio</div>
<div class="a" style="left:2618px;top:1682px;width:464px;height:64px;background:#e8e8e8;border-radius:14px"></div>
<div class="t" style="left:2636.7px;top:1701.7px;font-size:25.2px;color:#1f1f1f;font-weight:400;font-family:'Liberation Sans',sans-serif;">No</div>
<svg style="left:3040px;top:1708px;" width="20" height="12" viewBox="0 0 20 12"><path d="M2 2L10 10L18 2" fill="none" stroke="#666666" stroke-width="3" stroke-linecap="round" stroke-linejoin="round"/></svg>
</div>
<div class="a" style="left:2378px;top:1727px;width:758px;height:2px;background:#dcdcdc;"></div>
<div class="a" style="left:2378px;top:1729px;width:758px;height:63px;background:#f6f6f6;"></div>
<svg style="left:2398px;top:1748px;" width="22" height="26" viewBox="0 0 22 26"><path d="M2.5 2.5L19.5 13L2.5 23.5Z" fill="none" stroke="#1f1f1f" stroke-width="2.6" stroke-linejoin="round"/></svg>
<div class="t" style="left:2427.0px;top:1747.4px;font-size:25.5px;color:#1f1f1f;font-weight:400;font-family:'Liberation Sans',sans-serif;">Test Block</div>
<div class="a" style="left:112px;top:1792px;width:3024px;height:2px;background:#b3b3b3;"></div>
<div class="a" style="left:112px;top:1794px;width:3024px;height:56px;background:#f6f6f6;"></div>
<div class="a" style="left:124px;top:1804px;width:36px;height:36px;border-radius:7px;overflow:hidden;background:linear-gradient(180deg,#c9c4dc 0,#b9b3c9 30%,#6f7479 55%,#8f9aa0 100%)"><div class="a" style="left:8px;top:3px;width:9px;height:7px;border-radius:50%;background:#6b3f2e"></div><div class="a" style="left:19px;top:3px;width:9px;height:7px;border-radius:50%;background:#6b3f2e"></div><div class="a" style="left:10px;top:5px;width:16px;height:15px;border-radius:45%;background:#8d6450"></div><div class="a" style="left:12px;top:9px;width:4px;height:3px;border-radius:50%;background:#e8e8f0"></div><div class="a" style="left:20px;top:9px;width:4px;height:3px;border-radius:50%;background:#e8e8f0"></div><div class="a" style="left:16px;top:14px;width:4px;height:3px;border-radius:50%;background:#2a1a14"></div><div class="a" style="left:9px;top:20px;width:18px;height:12px;border-radius:5px 5px 2px 2px;background:repeating-linear-gradient(180deg,#d9434a 0,#d9434a 3px,#f2f2f2 3px,#f2f2f2 5px)"></div><div class="a" style="left:6px;top:30px;width:24px;height:6px;border-radius:3px;background:#8d6450"></div></div>
<div class="t" style="left:173.0px;top:1808.8px;font-size:25px;color:#6b6b6b;font-weight:400;font-family:'Liberation Sans',sans-serif;">MS Internal</div>
<div class="t" style="left:2794.0px;top:1808.3px;font-size:25.6px;color:#0a66ff;font-weight:400;font-family:'Liberation Sans',sans-serif;-webkit-text-stroke:0.6px #0a66ff">Help and Support</div>
<div class="a" style="left:3018px;top:1807px;width:2px;height:30px;background:#b8b8b8;"></div>
<svg style="left:3047px;top:1810px;" width="25" height="25" viewBox="0 0 25 25"><rect x="1.5" y="1.5" width="22" height="22" rx="3" fill="none" stroke="#0a66ff" stroke-width="2.6"/><path d="M16 1.5V23.5" stroke="#0a66ff" stroke-width="2.6"/><path d="M7.5 9.5L10.5 12.5L7.5 15.5" fill="none" stroke="#0a66ff" stroke-width="2.4" stroke-linecap="round" stroke-linejoin="round"/></svg>
<svg style="left:3095px;top:1810px;" width="25" height="25" viewBox="0 0 25 25"><rect x="1.5" y="1.5" width="22" height="22" rx="3" fill="none" stroke="#0a66ff" stroke-width="2.6"/><path d="M16 1.5V23.5" stroke="#0a66ff" stroke-width="2.6"/><path d="M10.5 9.5L7.5 12.5L10.5 15.5" fill="none" stroke="#0a66ff" stroke-width="2.4" stroke-linecap="round" stroke-linejoin="round"/></svg>
</div>
</body></html>
